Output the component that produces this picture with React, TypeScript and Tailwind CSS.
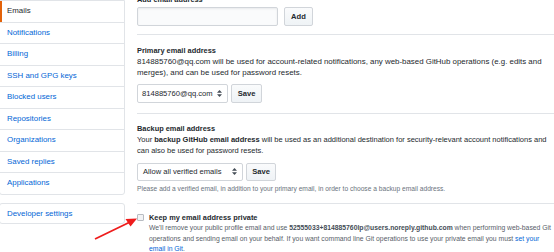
import React from 'react';

const SIDEBAR_ITEMS = [
  'Notifications',
  'Billing',
  'SSH and GPG keys',
  'Blocked users',
  'Repositories',
  'Organizations',
  'Saved replies',
  'Applications',
];

const Caret = () => (
  <svg width="5" height="7" viewBox="0 0 5 7" className="shrink-0">
    <path d="M2.5 0 L5 2.8 L0 2.8 Z" fill="#444d56" />
    <path d="M0 4.2 L5 4.2 L2.5 7 Z" fill="#444d56" />
  </svg>
);

const Btn = ({ label, className }: { label: string; className?: string }) => (
  <div
    className={
      'flex items-center justify-center rounded-[2px] border border-[#d1d5da] bg-gradient-to-b from-[#fafbfc] to-[#eff3f6] text-[7.6px] font-bold text-[#24292e] ' +
      (className ?? '')
    }
  >
    {label}
  </div>
);

const Select = ({ value, className }: { value: string; className?: string }) => (
  <div
    className={
      'flex items-center justify-between rounded-[2px] border border-[#d1d5da] bg-white pl-[4px] pr-[5px] text-[7.6px] text-[#24292e] ' +
      (className ?? '')
    }
  >
    <span>{value}</span>
    <Caret />
  </div>
);

export default function App() {
  return (
    <div
      className="relative flex h-[252px] w-[554px] overflow-hidden bg-white text-[#24292e]"
      style={{ fontFamily: '"Liberation Sans", Arial, sans-serif' }}
    >
      {/* sidebar */}
      <div className="-ml-px w-[126px] shrink-0">
        <div className="rounded-b-[3px] border border-[#e1e4e8]">
          <div className="flex h-[20.5px] items-center border-l-2 border-[#e36209] pl-[5px] text-[7.9px] font-medium text-[#24292e]">
            Emails
          </div>
          {SIDEBAR_ITEMS.map((item) => (
            <div
              key={item}
              className="flex h-[21.5px] items-center border-t border-[#e1e4e8] pl-[7px] text-[7.9px] text-[#0366d6]"
            >
              {item}
            </div>
          ))}
        </div>
        <div className="mt-[8.5px] flex h-[21px] items-center rounded-[3px] border border-[#e1e4e8] pl-[7px] text-[7.9px] text-[#0366d6]">
          Developer settings
        </div>
      </div>

      {/* main */}
      <div className="ml-[12px] flex-1 -mt-[6px]">
        <div className="h-[11px] text-[7.4px] font-bold leading-[11px]">Add email address</div>
        <div className="mt-[2px] flex h-[19px] gap-[6px]">
          <div className="w-[141px] rounded-[2px] border border-[#d1d5da] bg-[#fafbfc] shadow-[inset_0_1px_2px_rgba(27,31,35,0.075)]" />
          <Btn label="Add" className="w-[29px]" />
        </div>

        <div className="mt-[8px] border-t border-[#e1e4e8] pt-[10px]">
          <div className="text-[7.4px] font-bold leading-[11px]">Primary email address</div>
          <p className="text-[7.9px] leading-[11px]">
            814885760@qq.com will be used for account-related notifications, any web-based GitHub operations (e.g. edits and merges), and can be used for password resets.
          </p>
          <div className="mt-[6px] flex h-[19px] gap-[3px]">
            <Select value="814885760@qq.com" className="w-[91px]" />
            <Btn label="Save" className="w-[31px]" />
          </div>
        </div>

        <div className="mt-[10px] border-t border-[#e1e4e8] pt-[8.5px]">
          <div className="text-[7.4px] font-bold leading-[11px]">Backup email address</div>
          <p className="text-[7.5px] leading-[11.5px]">
            Your <b>backup GitHub email address</b> will be used as an additional destination for security-relevant account notifications and can also be used for password resets.
          </p>
          <div className="mt-[6px] flex h-[18px] gap-[3px]">
            <Select value="Allow all verified emails" className="w-[106px] pl-[5px]" />
            <Btn label="Save" className="w-[30px]" />
          </div>
          <p className="mt-[3px] text-[6.65px] leading-[10px] text-[#6a737d]">
            Please add a verified email, in addition to your primary email, in order to choose a backup email address.
          </p>
        </div>

        <div className="mt-[9px] flex gap-[5px] border-t border-[#e1e4e8] pt-[8.5px]">
          <div className="mt-[1.5px] h-[7px] w-[7px] shrink-0 rounded-[1px] border border-[#b8bcc2] bg-[#f2f3f5]" />
          <div>
            <div className="text-[7.4px] font-bold leading-[11px]">Keep my email address private</div>
            <p className="text-[6.8px] leading-[10.5px] text-[#586069]">
              We'll remove your public profile email and use <b className="text-[#444d56]">52555033+814885760lp@users.noreply.github.com</b> when performing web-based Git operations and sending email on your behalf. If you want command line Git operations to use your private email you must{' '}
              <span className="text-[#0366d6]">set your</span>{' '}
              <span className="text-[#0366d6]">email in Git</span>.
            </p>
          </div>
        </div>
      </div>

      {/* annotation arrow */}
      <svg className="absolute left-0 top-0" width="554" height="252" viewBox="0 0 554 252">
        <line x1="95" y1="239" x2="129" y2="222.5" stroke="#ee1c1c" strokeWidth="1.8" />
        <path d="M137 218.5 L125.5 219 L130.5 226.5 Z" fill="#ee1c1c" />
      </svg>
    </div>
  );
}
